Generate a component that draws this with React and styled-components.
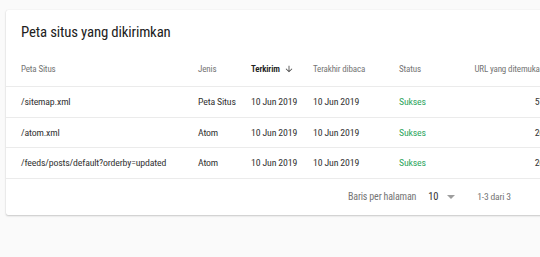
import React from "react";
import styled, { createGlobalStyle } from "styled-components";

const GlobalStyle = createGlobalStyle`
  html, body {
    margin: 0;
    padding: 0;
    background: #fafafa;
    font-family: Roboto, "Liberation Sans", sans-serif;
    font-stretch: 75%;
    letter-spacing: -0.15px;
    overflow: hidden;
  }
`;

const Page = styled.div`
  width: 540px;
  height: 257px;
  padding: 10px 0 0 6px;
  box-sizing: border-box;
  overflow: hidden;
`;

const Card = styled.div`
  width: 640px;
  background: #fff;
  border-radius: 2px;
  box-shadow: 0 1px 2px rgba(0, 0, 0, 0.2), 0 0 1px rgba(0, 0, 0, 0.12);
`;

const Title = styled.h2`
  margin: 0;
  padding: 12px 15px 0;
  height: 42px;
  box-sizing: border-box;
  font-size: 14.8px;
  font-weight: 400;
  letter-spacing: -0.15px;
  color: #212121;
  line-height: 20px;
`;

const Row = styled.div`
  display: grid;
  grid-template-columns: 177px 53px 62px 86px 74px 71px;
  padding-left: 15px;
  height: ${(p) => (p.head ? "35px" : "30.5px")};
  align-items: center;
  border-bottom: 1px solid #ebebeb;
  box-sizing: border-box;
  font-size: ${(p) => (p.head ? "9px" : "9.8px")};
  color: ${(p) => (p.head ? "#757575" : "#333")};
`;

const Cell = styled.div`
  white-space: nowrap;
  display: flex;
  align-items: center;
  justify-content: ${(p) => (p.right ? "flex-end" : "flex-start")};
  color: ${(p) => (p.success ? "#2ea55e" : p.active ? "#212121" : "inherit")};
  font-weight: ${(p) => (p.active ? 600 : 400)};
`;

const SortIcon = styled.svg`
  margin-left: 4px;
  width: 10px;
  height: 10px;
`;

const Footer = styled.div`
  height: 36px;
  display: flex;
  align-items: center;
  padding-left: 342px;
  font-size: 10px;
  letter-spacing: -0.18px;
  color: #757575;
`;

const PerPage = styled.div`
  display: flex;
  align-items: center;
  margin-left: 12px;
  font-size: 10.5px;
  color: #333;
  gap: 9px;
`;

const Range = styled.span`
  margin-left: 22px;
  font-size: 9.6px;
  letter-spacing: -0.2px;
  color: #757575;
`;

const rows = [
  ["/sitemap.xml", "Peta Situs", "57"],
  ["/atom.xml", "Atom", "26"],
  ["/feeds/posts/default?orderby=updated", "Atom", "26"],
];

export default function App() {
  return (
    <Page>
      <GlobalStyle />
      <Card>
        <Title>Peta situs yang dikirimkan</Title>
        <Row head>
          <Cell>Peta Situs</Cell>
          <Cell>Jenis</Cell>
          <Cell active>
            Terkirim
            <SortIcon viewBox="0 0 24 24">
              <path fill="#444" d="M20 12l-1.41-1.41L13 16.17V4h-2v12.17l-5.58-5.59L4 12l8 8 8-8z" />
            </SortIcon>
          </Cell>
          <Cell>Terakhir dibaca</Cell>
          <Cell>Status</Cell>
          <Cell right>URL yang ditemukan</Cell>
        </Row>
        {rows.map(([path, type, count]) => (
          <Row key={path}>
            <Cell>{path}</Cell>
            <Cell>{type}</Cell>
            <Cell>10 Jun 2019</Cell>
            <Cell>10 Jun 2019</Cell>
            <Cell success>Sukses</Cell>
            <Cell right>{count}</Cell>
          </Row>
        ))}
        <Footer>
          Baris per halaman
          <PerPage>
            10
            <svg width="8" height="4" viewBox="0 0 8 4">
              <path fill="#9e9e9e" d="M0 0h8L4 4z" />
            </svg>
          </PerPage>
          <Range>1-3 dari 3</Range>
        </Footer>
      </Card>
    </Page>
  );
}
